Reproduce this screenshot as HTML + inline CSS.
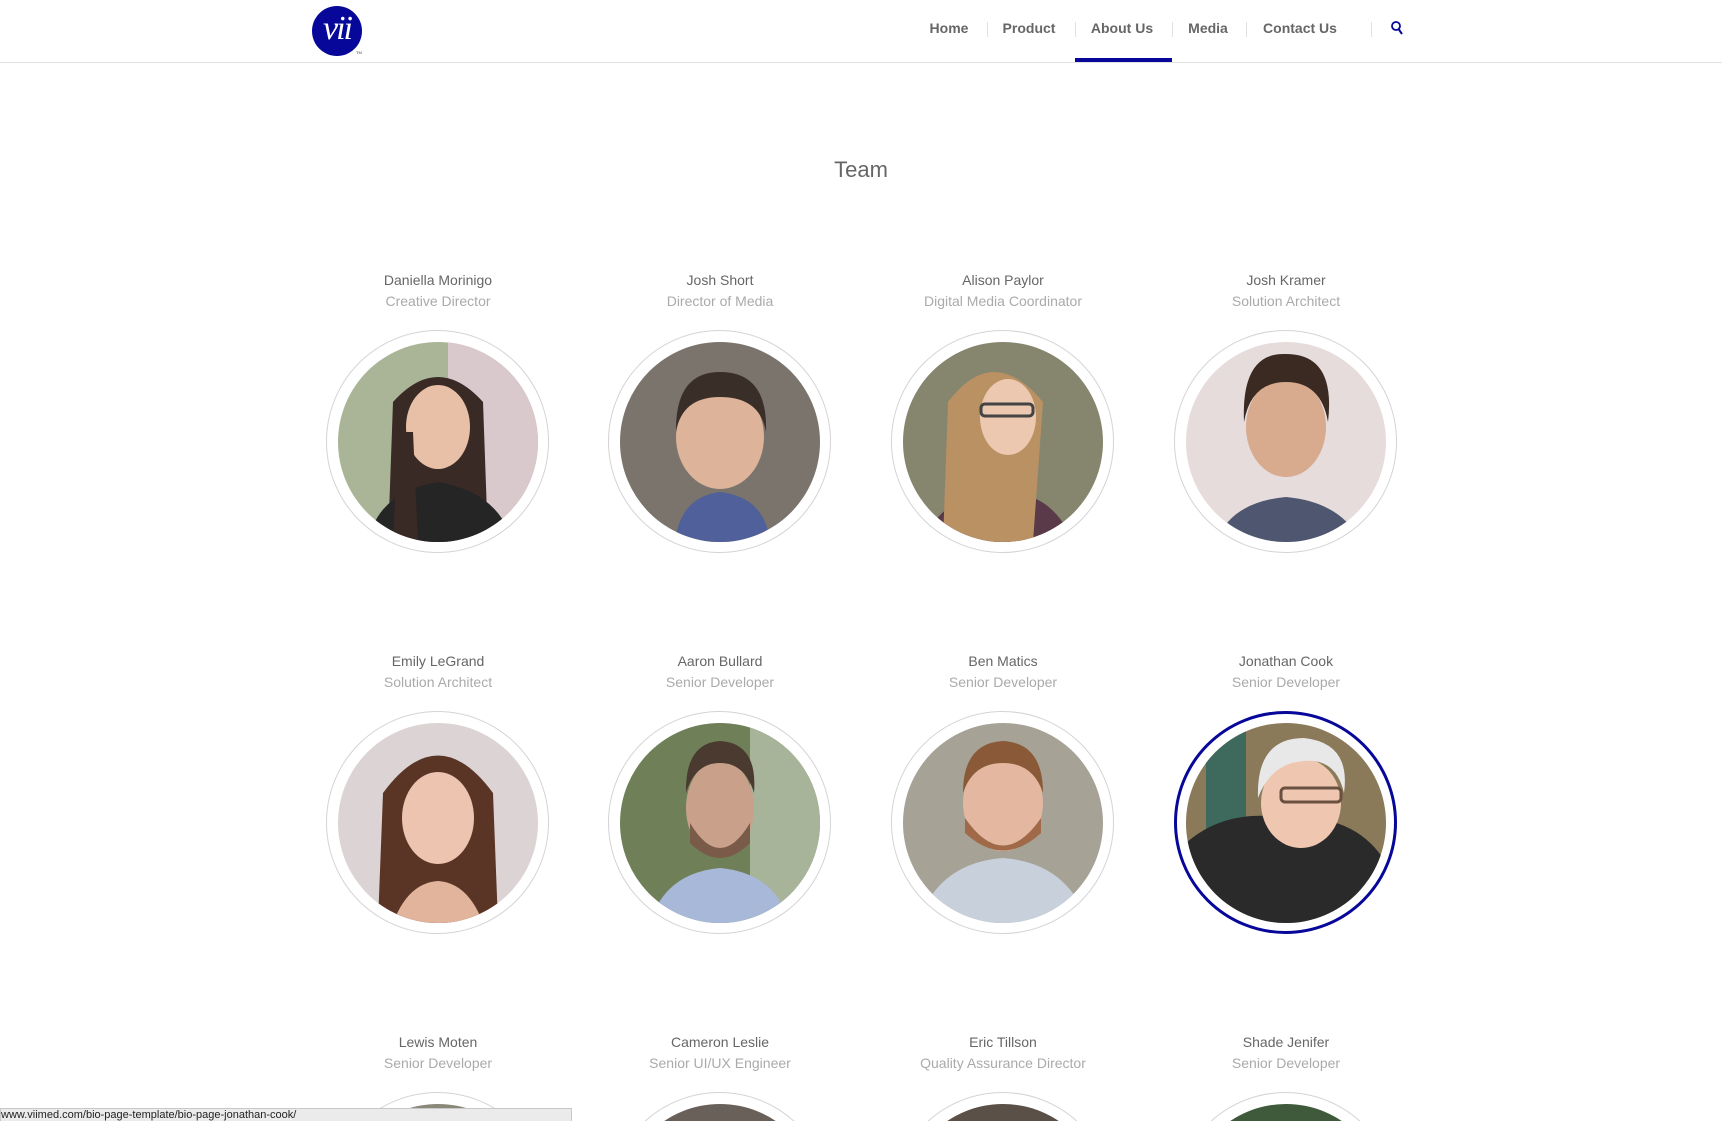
<!DOCTYPE html>
<html><head><meta charset="utf-8">
<style>
html,body{margin:0;padding:0;width:1722px;height:1121px;overflow:hidden;background:#fff;font-family:"Liberation Sans",Arial,sans-serif;}
#wrap{position:relative;width:1722px;height:1121px;overflow:hidden;}
.hdr{position:absolute;left:0;top:0;width:1722px;height:62px;border-bottom:1px solid #e1e1e1;}
.logo{position:absolute;left:312px;top:6px;width:50px;height:50px;border-radius:50%;background:#07079a;color:#fff;font-family:"Liberation Serif",serif;font-style:italic;font-size:34px;line-height:46px;text-align:center;letter-spacing:-2px;}
.tm{position:absolute;left:356px;top:50px;font-size:4px;color:#444;}
.nav a{position:absolute;top:20px;font-size:14px;font-weight:bold;color:#666;text-decoration:none;transform:translateX(-50%);white-space:nowrap;}
.sep{position:absolute;top:22px;width:1px;height:15px;background:#e1e1e1;}
.ul{position:absolute;left:1075px;top:58px;width:97px;height:4px;background:#07079a;}
h1{position:absolute;left:0;width:1722px;top:157px;margin:0;text-align:center;font-weight:normal;font-size:22px;color:#666;}
.m{position:absolute;width:280px;margin-left:-140px;text-align:center;}
.n{font-size:14px;color:#666;line-height:21px;}
.t{font-size:14px;color:#aaa;line-height:21px;}
.c{position:absolute;width:223px;height:223px;margin-left:-112px;border:1px solid #d4d4d4;border-radius:50%;box-sizing:border-box;}
.c.act{border:3px solid #07079a;}
.c svg{position:absolute;left:50%;top:50%;margin-left:-100px;margin-top:-100px;border-radius:50%;}
.status{position:absolute;left:0;top:1108px;width:572px;height:13px;background:#ebebeb;border:1px solid #c8c8c8;border-bottom:none;box-sizing:border-box;font-size:11px;line-height:13px;color:#222;white-space:nowrap;overflow:hidden;}
</style></head><body><div id="wrap">
<div class="hdr">
<div class="logo">vii</div><div class="tm">TM</div>
<div class="nav">
<a style="left:949px">Home</a>
<div class="sep" style="left:987px"></div>
<a style="left:1029px">Product</a>
<div class="sep" style="left:1075px"></div>
<a style="left:1122px">About Us</a>
<div class="sep" style="left:1172px"></div>
<a style="left:1208px">Media</a>
<div class="sep" style="left:1246px"></div>
<a style="left:1300px">Contact Us</a>
<div class="sep" style="left:1371px"></div>
<svg style="position:absolute;left:1390px;top:20px" width="14" height="16" viewBox="0 0 14 16"><circle cx="6" cy="6" r="4" fill="none" stroke="#07079a" stroke-width="1.8"/><path d="M8.5 9 L12 14" stroke="#07079a" stroke-width="2"/></svg>
</div>
<div class="ul"></div>
</div>
<h1>Team</h1>

<div class="m" style="left:438px;top:270px"><div class="n">Daniella Morinigo</div><div class="t">Creative Director</div></div>
<div class="m" style="left:720px;top:270px"><div class="n">Josh Short</div><div class="t">Director of Media</div></div>
<div class="m" style="left:1003px;top:270px"><div class="n">Alison Paylor</div><div class="t">Digital Media Coordinator</div></div>
<div class="m" style="left:1286px;top:270px"><div class="n">Josh Kramer</div><div class="t">Solution Architect</div></div>

<div class="c" style="left:438px;top:330px"><svg width="200" height="200"><rect width="200" height="200" fill="#a9b596"/><rect x="110" width="90" height="200" fill="#d9c8cc"/><path d="M50 200 L55 60 Q100 10 145 60 L150 200Z" fill="#3a2a25"/><ellipse cx="100" cy="85" rx="32" ry="42" fill="#e8c0a8"/><path d="M30 200 Q40 150 100 140 Q160 150 175 200Z" fill="#252525"/><path d="M55 200 L60 90 L75 90 L80 200Z" fill="#3a2a25"/></svg></div>
<div class="c" style="left:720px;top:330px"><svg width="200" height="200"><rect width="200" height="200" fill="#7a746c"/><path d="M55 200 Q60 155 100 150 Q145 155 150 200Z" fill="#50609a"/><ellipse cx="100" cy="95" rx="44" ry="52" fill="#ddb39a"/><path d="M56 90 Q55 30 100 30 Q148 30 146 90 Q140 55 100 55 Q62 55 56 90Z" fill="#3a2e28"/></svg></div>
<div class="c" style="left:1003px;top:330px"><svg width="200" height="200"><rect width="200" height="200" fill="#86866f"/><path d="M20 200 Q40 150 100 150 Q150 150 170 200Z" fill="#5a3a48"/><path d="M40 200 L45 60 Q90 0 140 60 L130 200Z" fill="#b99163"/><ellipse cx="105" cy="75" rx="28" ry="38" fill="#ecc8b0"/><rect x="78" y="62" width="52" height="12" rx="4" fill="none" stroke="#444" stroke-width="3"/></svg></div>
<div class="c" style="left:1286px;top:330px"><svg width="200" height="200"><rect width="200" height="200" fill="#e6dcdc"/><path d="M30 200 Q45 160 100 155 Q155 160 175 200Z" fill="#4e5670"/><ellipse cx="100" cy="85" rx="40" ry="50" fill="#d8aa8e"/><path d="M58 80 Q55 10 100 12 Q150 12 142 80 Q135 40 100 40 Q65 40 58 80Z" fill="#3a2a22"/></svg></div>

<div class="m" style="left:438px;top:651px"><div class="n">Emily LeGrand</div><div class="t">Solution Architect</div></div>
<div class="m" style="left:720px;top:651px"><div class="n">Aaron Bullard</div><div class="t">Senior Developer</div></div>
<div class="m" style="left:1003px;top:651px"><div class="n">Ben Matics</div><div class="t">Senior Developer</div></div>
<div class="m" style="left:1286px;top:651px"><div class="n">Jonathan Cook</div><div class="t">Senior Developer</div></div>

<div class="c" style="left:438px;top:711px"><svg width="200" height="200"><rect width="200" height="200" fill="#dcd4d4"/><path d="M40 200 L45 70 Q100 -5 155 70 L160 200Z" fill="#5a3526"/><ellipse cx="100" cy="95" rx="36" ry="46" fill="#ecc4b0"/><path d="M55 200 Q70 160 100 158 Q130 160 145 200Z" fill="#e2b49c"/></svg></div>
<div class="c" style="left:720px;top:711px"><svg width="200" height="200"><rect width="200" height="200" fill="#6f8058"/><rect x="130" width="70" height="200" fill="#a8b49a"/><path d="M30 200 Q45 150 100 145 Q155 150 170 200Z" fill="#a8b8d8"/><ellipse cx="100" cy="85" rx="34" ry="48" fill="#c9a18a"/><path d="M66 70 Q65 20 100 18 Q138 20 134 70 Q125 40 100 40 Q75 40 66 70Z" fill="#4a3a30"/><path d="M70 100 Q100 150 130 100 L130 120 Q100 150 70 120Z" fill="#7a5a48"/></svg></div>
<div class="c" style="left:1003px;top:711px"><svg width="200" height="200"><rect width="200" height="200" fill="#a6a296"/><path d="M15 200 Q35 140 100 135 Q165 140 185 200Z" fill="#c8d0dc"/><ellipse cx="100" cy="80" rx="40" ry="48" fill="#e4b8a0"/><path d="M60 70 Q60 20 100 18 Q140 20 140 70 Q130 40 100 40 Q70 40 60 70Z" fill="#8a5a38"/><path d="M62 95 Q100 150 138 95 L138 110 Q100 145 62 110Z" fill="#a06a48"/></svg></div>
<div class="c act" style="left:1286px;top:711px"><svg width="200" height="200"><rect width="200" height="200" fill="#8a7a5a"/><rect x="20" width="40" height="140" fill="#3e6a5e"/><path d="M0 200 L0 120 Q40 85 100 95 Q170 90 200 140 L200 200Z" fill="#2a2a2a"/><ellipse cx="115" cy="80" rx="40" ry="45" fill="#efc7b0"/><path d="M72 75 Q70 15 118 15 Q165 20 158 70 Q150 35 118 38 Q85 40 72 75Z" fill="#e8e8e8"/><rect x="95" y="65" width="60" height="14" rx="4" fill="none" stroke="#6a5040" stroke-width="3"/></svg></div>

<div class="m" style="left:438px;top:1032px"><div class="n">Lewis Moten</div><div class="t">Senior Developer</div></div>
<div class="m" style="left:720px;top:1032px"><div class="n">Cameron Leslie</div><div class="t">Senior UI/UX Engineer</div></div>
<div class="m" style="left:1003px;top:1032px"><div class="n">Eric Tillson</div><div class="t">Quality Assurance Director</div></div>
<div class="m" style="left:1286px;top:1032px"><div class="n">Shade Jenifer</div><div class="t">Senior Developer</div></div>

<div class="c" style="left:438px;top:1092px"><svg width="200" height="200"><rect width="200" height="200" fill="#8a8878"/></svg></div>
<div class="c" style="left:720px;top:1092px"><svg width="200" height="200"><rect width="200" height="200" fill="#6a605a"/></svg></div>
<div class="c" style="left:1003px;top:1092px"><svg width="200" height="200"><rect width="200" height="200" fill="#5a5048"/></svg></div>
<div class="c" style="left:1286px;top:1092px"><svg width="200" height="200"><rect width="200" height="200" fill="#3e5a3a"/></svg></div>

<div class="status">www.viimed.com/bio-page-template/bio-page-jonathan-cook/</div>
</div></body></html>
